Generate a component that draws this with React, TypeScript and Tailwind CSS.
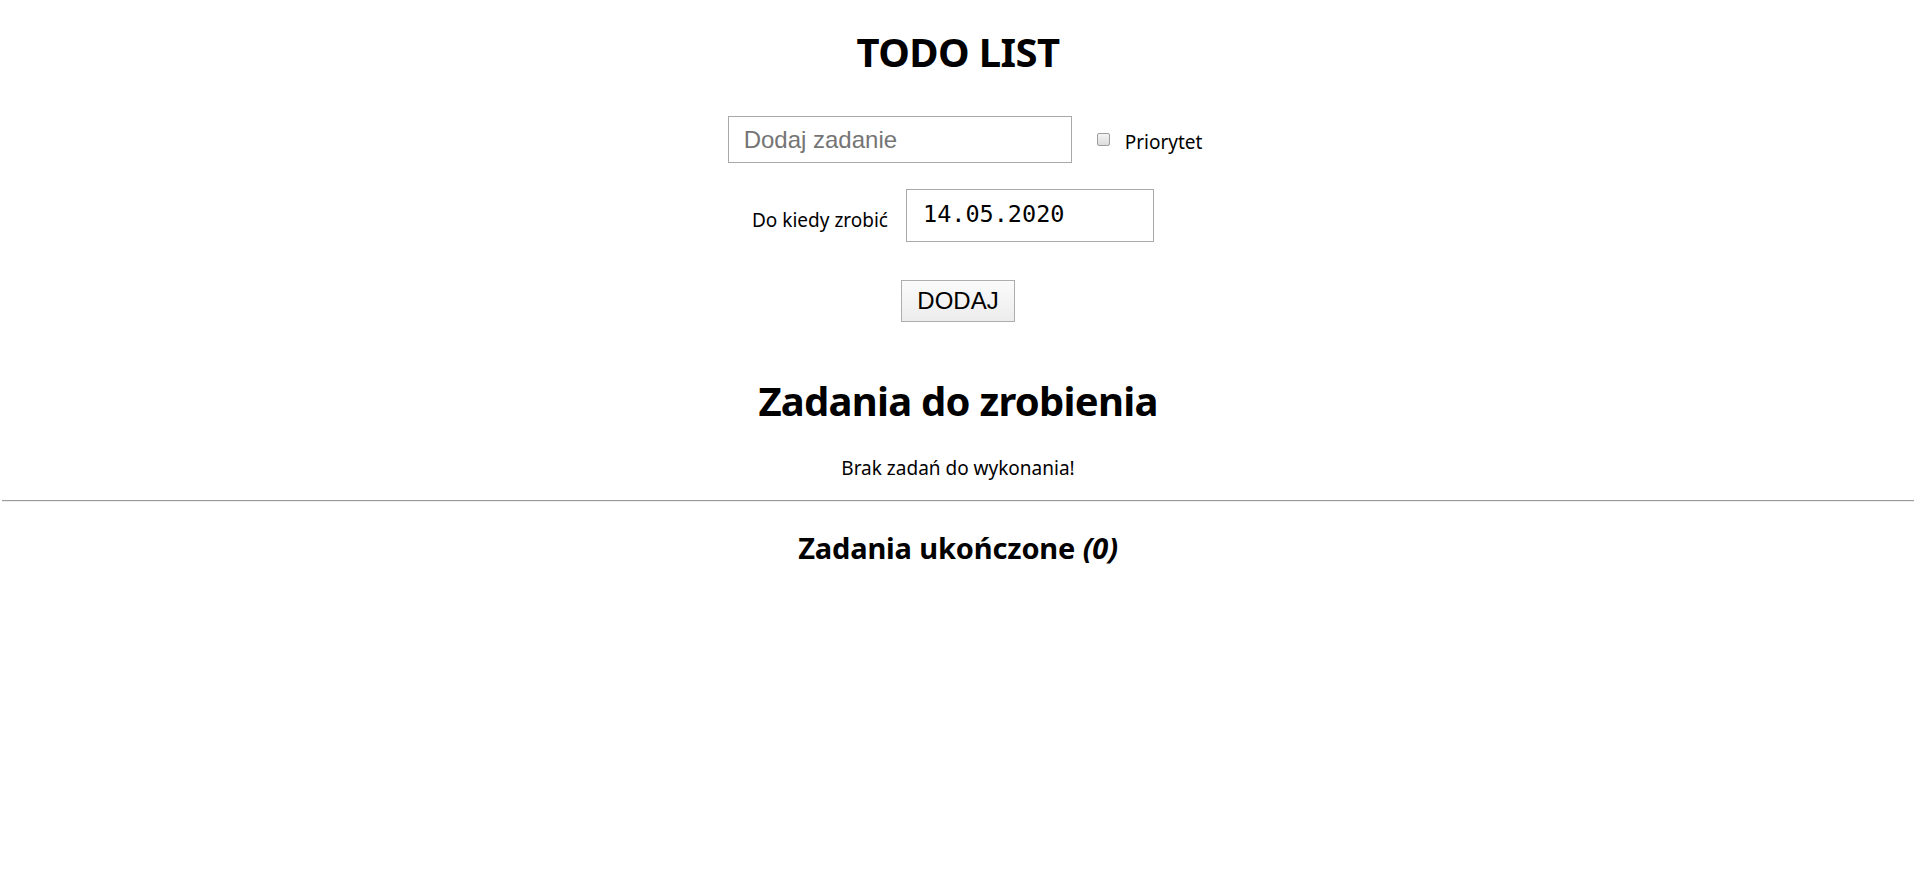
import React from 'react';

const sans = "font-['Noto_Sans',sans-serif]";

const App = (() => {
    return (
        <div className={`w-full min-h-[894px] bg-white text-black ${sans} flex flex-col items-center pt-[27px]`}>
            <h1 className="text-[40px] leading-[50px] font-bold tracking-[-0.6px]">TODO LIST</h1>

            <div className="mt-[39px] flex items-center pl-[14px]">
                <input
                    type="text"
                    placeholder="Dodaj zadanie"
                    className="w-[344px] h-[47px] border border-[#a9a9a9] px-[15px] text-[24px] font-['Liberation_Sans',Arial,sans-serif] placeholder:text-[#757575] outline-none"/>
                <span
                    className="ml-[25px] w-[13px] h-[13px] rounded-[2px] border border-[#9d9d9d] bg-gradient-to-b from-[#f4f4f4] to-[#dcdcdc]"></span>
                <span className="ml-[15px] text-[19px] leading-[24px] mt-[4px]">Priorytet</span>
            </div>

            <div className="mt-[26px] flex items-center pr-[10px]">
                <span className="text-[19px] leading-[24px] mt-[8px]">Do kiedy zrobić</span>
                <input
                    type="text"
                    readOnly
                    defaultValue="14.05.2020"
                    className="ml-[18px] w-[248px] h-[53px] border border-[#a9a9a9] pl-[16px] pb-[4px] text-[23.5px] font-['DejaVu_Sans_Mono',monospace] outline-none"/>
            </div>

            <button
                className="mt-[38px] w-[114px] h-[42px] border border-[#adadad] bg-gradient-to-b from-[#fbfbfb] to-[#ececec] text-[24px] font-['Liberation_Sans',Arial,sans-serif] leading-none">
                DODAJ
            </button>

            <h2 className="mt-[54px] text-[40px] leading-[50px] font-bold tracking-[-0.75px]">Zadania do zrobienia</h2>
            <p className="mt-[30px] text-[19px] leading-[24px]">Brak zadań do wykonania!</p>

            <hr className="mt-[20px] w-[calc(100%-4px)] h-0 border-t border-b border-t-[#9a9a9a] border-b-[#eeeeee]"/>

            <h3 className="mt-[28px] text-[29px] leading-[36px] font-bold tracking-[-0.15px]">
                Zadania ukończone <em>(0)</em>
            </h3>
        </div>
    )
})

export default App
